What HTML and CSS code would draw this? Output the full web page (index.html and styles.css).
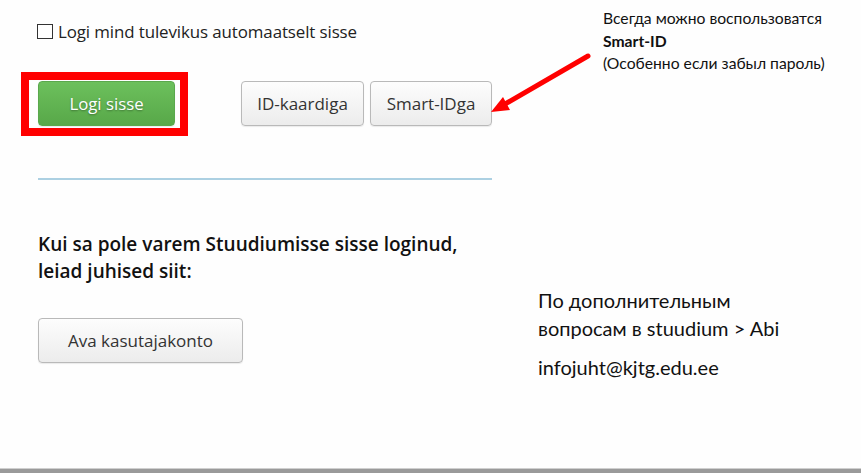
FILE: index.html
```html
<!DOCTYPE html>
<html lang="et">
<head>
<meta charset="utf-8">
<title>Stuudium</title>
<link rel="stylesheet" href="styles.css">
</head>
<body>
<div class="page">
  <div class="main">
    <div class="left">
      <label class="remember"><span class="box"></span>Logi mind tulevikus automaatselt sisse</label>
      <div class="actions">
        <div class="highlight"><button class="btn btn-green">Logi sisse</button></div>
        <div class="alt">
          <button class="btn btn-id">ID-kaardiga</button>
          <button class="btn btn-smart">Smart-IDga</button>
        </div>
      </div>
      <div class="divider"></div>
      <h2 class="intro">Kui sa pole varem Stuudiumisse sisse loginud,<br>leiad juhised siit:</h2>
      <button class="btn btn-account">Ava kasutajakonto</button>
    </div>
    <div class="right">
      <p class="help">По дополнительным<br>вопросам в stuudium &gt; Abi</p>
      <p class="mail">infojuht@kjtg.edu.ee</p>
    </div>
  </div>
  <div class="note">
    <div>Всегда можно воспользоватся</div>
    <div class="strong">Smart-ID</div>
    <div>(Особенно если забыл пароль)</div>
  </div>
  <svg class="arrow" width="110" height="70" viewBox="0 0 110 70">
    <line x1="103" y1="6" x2="15" y2="57" stroke="#ff0000" stroke-width="5" stroke-linecap="round"/>
    <polygon points="6,62 18,47 25,60" fill="#ff0000"/>
  </svg>
  <div class="footer-bar"></div>
</div>
</body>
</html>
```

FILE: styles.css
```css
html, body {
  margin: 0;
  padding: 0;
  background: #fefefe;
}
.page {
  position: relative;
  width: 861px;
  height: 473px;
  overflow: hidden;
  font-family: "Open Sans", "Noto Sans", sans-serif;
  color: #1a1a1a;
}
.main {
  display: flex;
  padding-left: 37px;
  padding-top: 21px;
}
.left {
  width: 455px;
  display: flex;
  flex-direction: column;
}
.remember {
  display: flex;
  align-items: center;
  font-size: 16.9px;
  height: 20px;
  color: #222;
  letter-spacing: -0.1px;
}
.box {
  width: 14px;
  height: 13px;
  border: 1px solid #333;
  margin-right: 5px;
  background: #fff;
}
.actions {
  display: flex;
  margin-top: 40px;
  padding-left: 1px;
  align-items: flex-start;
}
.highlight {
  position: relative;
}
.highlight::after {
  content: "";
  position: absolute;
  left: -17px;
  top: -9px;
  width: 151px;
  height: 48px;
  border: 8px solid #ff0000;
  pointer-events: none;
}
.btn {
  font-family: "Open Sans", "Noto Sans", sans-serif;
  font-size: 17px;
  height: 45px;
  border-radius: 4px;
  border: 1px solid #b9b9b9;
  background: linear-gradient(#fdfdfd, #ececec);
  color: #333;
  padding: 0;
  cursor: pointer;
  box-shadow: 0 1px 1px rgba(0,0,0,0.08);
}
.btn-green {
  width: 137px;
  font-size: 16.8px;
  border: 1px solid #5aa84c;
  background: linear-gradient(#6cc05c, #58a849);
  color: #fff;
  text-shadow: 0 1px 2px rgba(0,0,0,0.35);
}
.alt {
  display: flex;
  gap: 6px;
  margin-left: 66px;
}
.btn-id { width: 123px; }
.btn-smart { width: 122px; }
.divider {
  margin-top: 52px;
  margin-left: 1px;
  height: 2px;
  background: #acd0e2;
  width: 454px;
}
.intro {
  margin: 51px 0 0 1px;
  font-size: 19px;
  font-weight: 600;
  line-height: 27px;
  color: #111;
}
.btn-account {
  margin-top: 33px;
  margin-left: 1px;
  width: 205px;
}
.right {
  margin-left: 46px;
  padding-top: 265px;
  font-family: "Lato", "Open Sans", sans-serif;
  font-size: 20px;
  color: #111;
}
.help {
  margin: 0;
  line-height: 28px;
}
.mail {
  margin: 13px 0 0 0;
}
.note {
  position: absolute;
  left: 603px;
  top: 7px;
  font-family: "Lato", "Open Sans", sans-serif;
  font-size: 15.7px;
  line-height: 22.5px;
  color: #111;
}
.note .strong { font-weight: 700; }
.arrow {
  position: absolute;
  left: 485px;
  top: 50px;
}
.footer-bar {
  position: absolute;
  left: 0;
  right: 0;
  bottom: 0;
  height: 4px;
  border-top: 1px solid #cfcfcf;
  background: #9a9a9a;
}
```
